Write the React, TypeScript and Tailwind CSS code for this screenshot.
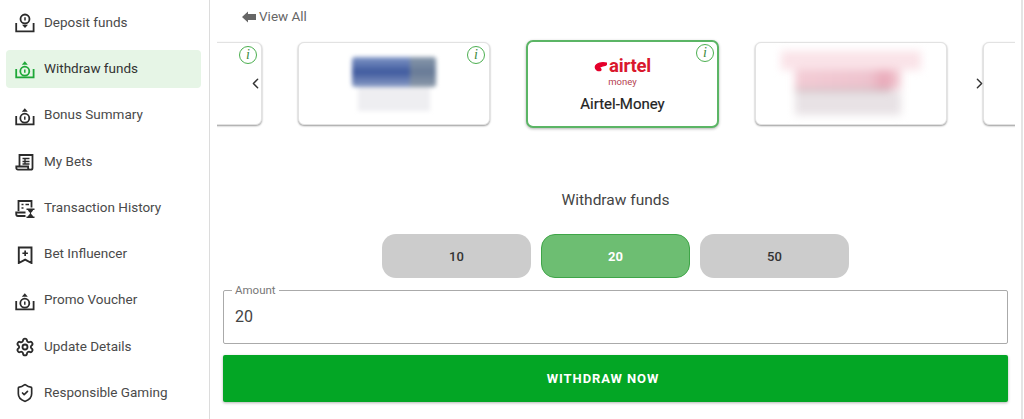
import React from "react";
import { ChevronLeft, ChevronRight, Settings, ShieldCheck } from "lucide-react";

function MoneyIcon({ down = false }: { down?: boolean }) {
  return (
    <svg viewBox="0 0 20 20" className="w-5 h-5" fill="none" stroke="currentColor" strokeWidth="1.8">
      <path d="M1.200 10v8.300h17.400V10" />
      {down ? (
        <>
          <circle cx="10" cy="6" r="4.500" />
          <path d="M10 4.200v3.400" strokeWidth="1.500" />
          <path d="M7 11.800h6L10 15z" fill="currentColor" stroke="none" />
        </>
      ) : (
        <>
          <circle cx="9.800" cy="12.200" r="4.500" />
          <path d="M9.800 10.400v3.400" strokeWidth="1.500" />
          <path d="M6.800 5.800h6L9.800 2.200z" fill="currentColor" stroke="none" />
        </>
      )}
    </svg>
  );
}

function BetsIcon() {
  return (
    <svg viewBox="0 0 20 20" className="w-5 h-5" fill="none" stroke="currentColor" strokeWidth="1.800">
      <path d="M4.500 14V3h13v13c0 1-.7 1.700-1.700 1.700H3c-1 0-1.700-.7-1.700-1.700v-1.500h11.800v1.500c0 1 .8 1.700 1.700 1.700" />
      <path d="M7.500 6.500h7M7.500 9.500h7M7.500 12h7M10 6v6.500" strokeWidth="1.400" />
    </svg>
  );
}

function HistoryIcon() {
  return (
    <svg viewBox="0 0 20 20" className="w-5 h-5" fill="none" stroke="currentColor" strokeWidth="1.800">
      <path d="M3.500 13V3h13v6.500" />
      <path d="M6.500 6.500h2M10.500 6.500h3.500M6.500 10h2" strokeWidth="1.500" />
      <path d="M10.500 14.500H1.200V16c0 1.200.8 2 1.800 2h7.500" />
      <path d="M11.500 11.200h8M11.500 19.200h8" strokeWidth="1.400" />
      <path d="M12.800 11.200c0 2.300 2.300 2.700 2.300 4s-2.300 1.700-2.300 4h5.400c0-2.300-2.300-2.700-2.300-4s2.300-1.700 2.300-4z" fill="currentColor" stroke="none" />
    </svg>
  );
}

function BookmarkIcon() {
  return (
    <svg viewBox="0 0 20 20" className="w-5 h-5" fill="none" stroke="currentColor" strokeWidth="1.900">
      <path d="M3.800 3.500h12.700v15.500l-6.350-3.400L3.800 19z" />
      <path d="M10.150 6.500v5.500M7.400 9.250h5.500" strokeWidth="1.700" />
    </svg>
  );
}

const menu = [
  { label: "Deposit funds", icon: <MoneyIcon down /> },
  { label: "Withdraw funds", icon: <MoneyIcon />, active: true },
  { label: "Bonus Summary", icon: <MoneyIcon /> },
  { label: "My Bets", icon: <BetsIcon /> },
  { label: "Transaction History", icon: <HistoryIcon /> },
  { label: "Bet Influencer", icon: <BookmarkIcon /> },
  { label: "Promo Voucher", icon: <MoneyIcon /> },
  { label: "Update Details", icon: <Settings className="w-5 h-5" strokeWidth={2.200} /> },
  { label: "Responsible Gaming", icon: <ShieldCheck className="w-5 h-5" strokeWidth={2} /> },
];

function InfoBadge({ className }: { className: string }) {
  return (
    <span
      className={`absolute flex items-center justify-center w-[18px] h-[18px] rounded-full border border-[#4caf50] bg-white text-[#3d8b40] text-[14px] italic leading-none ${className}`}
      style={{ fontFamily: '"Liberation Serif", serif' }}
    >
      i
    </span>
  );
}

function BankBlur() {
  return (
    <div className="flex flex-col items-center blur-[2px]">
      <div className="flex justify-end w-[84px] h-[30px] rounded-[3px] bg-[linear-gradient(180deg,#8096c6_0%,#3f5a9e_50%,#8b9dc6_100%)]">
        <div className="w-[26px] h-full rounded-r-[3px] bg-[#8f9a8f]/50" />
      </div>
      <div className="w-[72px] h-[24px] bg-[#eeeef1]" />
    </div>
  );
}

function PinkBlur() {
  return (
    <div className="flex flex-col w-[140px] -mt-[2px] blur-[4px]">
      <div className="h-[19px] bg-[#fae3e8]" />
      <div className="h-[19px] mx-[14px] mr-[20px] bg-[linear-gradient(90deg,#f3ccd5_0%,#eec3ce_70%,#e9a8b8_85%,#f3d0d8_100%)]" />
      <div className="h-[2px] mx-[14px] mr-[30px] bg-[#b9a8ac]" />
      <div className="h-[24px] mx-[14px] mr-[20px] bg-[#e8e2e5]" />
    </div>
  );
}

const cardClass = "relative flex-none w-[192px] h-[83px] bg-white rounded-[6px] border border-[#e2e2e2] shadow-[0_1px_2px_rgba(0,0,0,0.4)]";

export default function App() {
  return (
    <div
      className="flex w-[1024px] h-[419px] overflow-hidden bg-white text-[#333]"
      style={{ fontFamily: 'Roboto, "Liberation Sans", sans-serif' }}
    >
      <aside className="w-[210px] flex-none border-r border-[#dcdcdc] pt-[4px] pr-[8px] pl-[6px] flex flex-col">
        {menu.map((item) => (
          <div
            key={item.label}
            className={`flex-none flex items-center h-[38px] mb-[8.250px] pl-[9px] gap-[9px] rounded-[4px] text-[13.500px] ${
              item.active ? "bg-[#e6f5e6] text-[#333]" : "text-[#4a4a4a]"
            }`}
          >
            <span className={item.active ? "text-[#1fa838]" : "text-[#2b2b2b]"}>{item.icon}</span>
            <span className="pb-[2px]">{item.label}</span>
          </div>
        ))}
      </aside>

      <main className="w-[813px] flex-none border-r-2 border-[#e4e4e4] pl-[7px] pr-[7px] flex flex-col">
        <div className="flex items-center h-[33px] pl-[25px] gap-[3px] text-[13.500px] text-[#666]">
          <svg viewBox="0 0 14 12" className="w-[14px] h-[12px]" fill="#666">
            <path d="M0 6l6-5.500V3h8v6H6v2.500z" />
          </svg>
          View All
        </div>

        <div className="relative w-[798px] flex-none">
          <div className="flex items-center gap-9 h-[101px] overflow-hidden">
            <div className={`${cardClass} -ml-[147px]`}>
              <InfoBadge className="top-[3px] right-[4px]" />
            </div>
            <div className={`${cardClass} flex items-center justify-center`}>
              <BankBlur />
              <InfoBadge className="top-[3px] right-[4px]" />
            </div>
            <div className="relative flex-none flex flex-col items-center w-[193px] h-[88px] pt-[16px] bg-white rounded-[7px] border-2 border-[#5bb565] shadow-[0_1px_3px_rgba(0,0,0,0.3)]">
              <div className="flex items-center gap-[2px] h-[18px]">
                <svg viewBox="0 0 14 12" className="w-[13px] h-[12px]" fill="#e4002b" stroke="#e4002b" strokeWidth="1.500">
                  <path d="M13.500 1.800C9 .6 2.200 1.600 1.500 5.800c-.3 2.800 2.800 4.600 5 4 1.500-.5 1-2.300-.6-2.500-.6-2 4-2.500 6-3 1.200-.5 1.800-1.600 1.600-2.500z" />
                </svg>
                <span className="text-[18.500px] font-bold leading-none text-[#d9182d] tracking-[-0.2px]">airtel</span>
              </div>
              <span className="text-[9.500px] leading-[11px] text-[#b5414f]">money</span>
              <span className="mt-[8px] text-[15px] text-[#222] leading-[18px] [-webkit-text-stroke:0.2px_#222]">Airtel-Money</span>
              <InfoBadge className="top-[2px] right-[3px]" />
            </div>
            <div className={`${cardClass} flex items-center justify-center`}>
              <PinkBlur />
            </div>
            <div className={cardClass} />
          </div>
          <ChevronLeft className="absolute left-[30px] top-[42px] w-[17px] h-[17px] text-[#333]" strokeWidth={2} />
          <ChevronRight className="absolute left-[754px] top-[42px] w-[17px] h-[17px] text-[#333]" strokeWidth={2} />
        </div>

        <p className="mt-[56px] text-center text-[15.500px] leading-[20px] text-[#444]">Withdraw funds</p>

        <div className="flex justify-center gap-[10px] mt-[24px] text-[13px] font-medium">
          <button className="w-[149px] h-[44px] pt-[1px] rounded-[14px] bg-[#cccccc] text-[#333]">10</button>
          <button className="w-[149px] h-[44px] pt-[1px] rounded-[14px] bg-[#6dbe72] border border-[#3fa548] text-white font-bold">20</button>
          <button className="w-[149px] h-[44px] pt-[1px] rounded-[14px] bg-[#cccccc] text-[#333]">50</button>
        </div>

        <div className="relative mt-[12px] ml-[6px] w-[785px] h-[54px] border border-[#aaa] rounded-[2px] pl-[11px] pt-[15px] text-[16px] leading-[22px] text-[#444]">
          <span className="absolute -top-[7px] left-[8px] px-[3px] bg-white text-[11.500px] leading-[13px] text-[#777]">Amount</span>
          20
        </div>

        <button className="mt-[11px] ml-[6px] w-[785px] h-[47px] pr-[25px] rounded-[2px] bg-[#03a625] text-white text-[13px] font-bold tracking-[0.900px] shadow-[0_1px_3px_rgba(0,0,0,0.3)]">
          WITHDRAW NOW
        </button>
      </main>
    </div>
  );
}
